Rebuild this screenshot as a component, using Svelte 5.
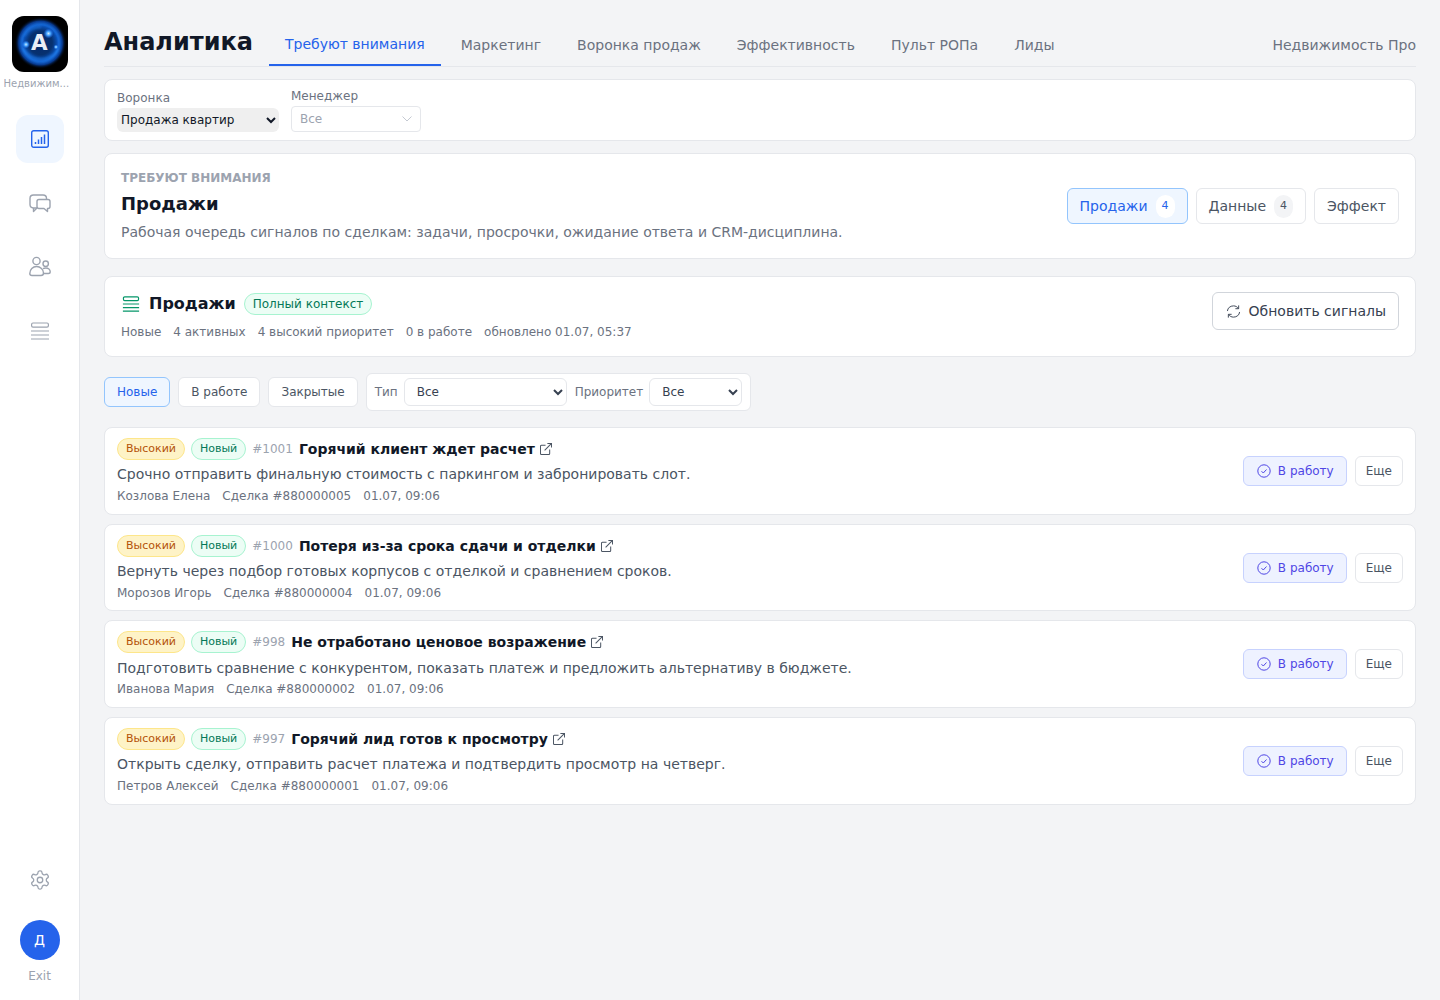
<script lang="ts">
  // analytics "needs attention" page: sidebar, tabs, filters and the signal list
  const tabs = ["Требуют внимания", "Маркетинг", "Воронка продаж", "Эффективность", "Пульт РОПа", "Лиды"];

  const signals = [
    { id: "#1001", title: "Горячий клиент ждет расчет", text: "Срочно отправить финальную стоимость с паркингом и забронировать слот.", who: "Козлова Елена", deal: "Сделка #880000005" },
    { id: "#1000", title: "Потеря из-за срока сдачи и отделки", text: "Вернуть через подбор готовых корпусов с отделкой и сравнением сроков.", who: "Морозов Игорь", deal: "Сделка #880000004" },
    { id: "#998", title: "Не отработано ценовое возражение", text: "Подготовить сравнение с конкурентом, показать платеж и предложить альтернативу в бюджете.", who: "Иванова Мария", deal: "Сделка #880000002" },
    { id: "#997", title: "Горячий лид готов к просмотру", text: "Открыть сделку, отправить расчет платежа и подтвердить просмотр на четверг.", who: "Петров Алексей", deal: "Сделка #880000001" },
  ];
</script>

<div class="shell">
  <aside class="side">
    <svg class="logo" width="56" height="56" viewBox="0 0 56 56">
      <defs>
        <radialGradient id="glow" cx="0.5" cy="0.5" r="0.5">
          <stop offset="0" stop-color="#052a6e"/>
          <stop offset="0.45" stop-color="#07316f"/>
          <stop offset="0.7" stop-color="#0c58c8"/>
          <stop offset="0.84" stop-color="#083a8f"/>
          <stop offset="1" stop-color="#000" stop-opacity="0"/>
        </radialGradient>
        <radialGradient id="spark" cx="0.5" cy="0.5" r="0.5">
          <stop offset="0" stop-color="#cfe9ff"/>
          <stop offset="0.4" stop-color="#4aa8ff"/>
          <stop offset="1" stop-color="#1e70ff" stop-opacity="0"/>
        </radialGradient>
        <filter id="soft" x="-20%" y="-20%" width="140%" height="140%">
          <feGaussianBlur stdDeviation="1"/>
        </filter>
      </defs>
      <rect width="56" height="56" rx="12" fill="#000"/>
      <circle cx="28.500" cy="27" r="26" fill="url(#glow)"/>
      <g filter="url(#soft)" fill="none" stroke="#2f95ff">
        <circle cx="28.500" cy="27" r="19" stroke-width="1.200" opacity=".7"/>
        <path d="M11 32c4 7 11 11 18 11s14-4 17-10" stroke-width="1.200" opacity=".8"/>
        <path d="M13 20c3-6 9-9 16-9" stroke-width="1" opacity=".7"/>
      </g>
      <circle cx="36.500" cy="17.500" r="5" fill="url(#spark)"/>
      <circle cx="14" cy="28.500" r="4" fill="url(#spark)"/>
      <circle cx="44" cy="31" r="2.500" fill="url(#spark)"/>
      <text x="27.300" y="34.300" text-anchor="middle" class="logo-a">A</text>
    </svg>
    <div class="org">Недвижим...</div>
    <nav class="nav">
      <a class="nav-item active" href="#a" aria-label="Аналитика">
        <svg width="20" height="20" viewBox="0 0 20 20" fill="none" stroke="currentColor" stroke-width="1.400">
          <rect x="1.700" y="1.700" width="16.600" height="16.600" rx="2"/>
          <path d="M5.500 15v-2M8.500 15v-4.500M11.500 15V8M14.500 15V5.500" stroke-width="1.500"/>
        </svg>
      </a>
      <a class="nav-item" href="#b" aria-label="Чаты">
        <svg width="24" height="24" viewBox="0 -1 24 24" fill="none" stroke="currentColor" stroke-width="1.400" stroke-linejoin="round">
          <path d="M9 16H5.500C3.500 16 2 14.600 2 12.600V6.500C2 4.500 3.500 3 5.500 3h9.500c2 0 3.500 1.500 3.500 3.500V7"/>
          <path d="M5.500 16v3.500L9 16"/>
          <path d="M11 7.500h9c1.200 0 2 .8 2 2v5c0 1.200-.8 2-2 2h-.5v3l-3.500-3h-5c-1.200 0-2-.8-2-2v-5c0-1.200.8-2 2-2z" fill="#fff"/>
        </svg>
      </a>
      <a class="nav-item" href="#c" aria-label="Клиенты">
        <svg width="24" height="24" viewBox="0 0 24 24" fill="none" stroke="currentColor" stroke-width="1.400">
          <circle cx="8.500" cy="6" r="3.600"/>
          <circle cx="17.700" cy="8.700" r="2.700"/>
          <path d="M1.800 18.500c0-4 3-7 6.800-7s6.900 3 6.900 6.500c0 1.500-.9 2.500-2.500 2.500H4c-1.400 0-2.200-.7-2.200-2z"/>
          <path d="M15 13.700c.8-.4 1.700-.7 2.800-.7 2.500 0 4.400 1.700 4.400 3.700 0 1.100-.7 1.800-1.800 1.800h-5"/>
        </svg>
      </a>
      <a class="nav-item" href="#d" aria-label="Списки">
        <svg width="20" height="20" viewBox="0 0 20 20" fill="none" stroke="currentColor" stroke-width="1.200">
          <rect x="1.600" y="2" width="16.800" height="4.200" rx="1.400"/>
          <path d="M1 10h18M1 14h18M1 18h18"/>
        </svg>
      </a>
    </nav>
    <div class="side-bottom">
      <svg class="gear" width="22" height="22" viewBox="0 0 24 24" fill="none" stroke="currentColor" stroke-width="1.400" stroke-linejoin="round">
        <path d="M12.220 2h-.44a2 2 0 0 0-2 2v.18a2 2 0 0 1-1 1.730l-.43.25a2 2 0 0 1-2 0l-.15-.08a2 2 0 0 0-2.730.73l-.22.38a2 2 0 0 0 .73 2.730l.15.1a2 2 0 0 1 1 1.720v.51a2 2 0 0 1-1 1.740l-.15.09a2 2 0 0 0-.73 2.730l.22.38a2 2 0 0 0 2.730.73l.15-.08a2 2 0 0 1 2 0l.43.25a2 2 0 0 1 1 1.730V20a2 2 0 0 0 2 2h.44a2 2 0 0 0 2-2v-.18a2 2 0 0 1 1-1.730l.43-.25a2 2 0 0 1 2 0l.15.08a2 2 0 0 0 2.730-.73l.22-.39a2 2 0 0 0-.73-2.730l-.15-.08a2 2 0 0 1-1-1.740v-.5a2 2 0 0 1 1-1.740l.15-.09a2 2 0 0 0 .73-2.730l-.22-.38a2 2 0 0 0-2.730-.73l-.15.08a2 2 0 0 1-2 0l-.43-.25a2 2 0 0 1-1-1.730V4a2 2 0 0 0-2-2z"/>
        <circle cx="12" cy="12" r="3"/>
      </svg>
      <div class="avatar">Д</div>
      <div class="exit">Exit</div>
    </div>
  </aside>

  <main class="main">
    <header class="top">
      <h1>Аналитика</h1>
      <div class="tabs">
        {#each tabs as t, i}
          <a class="tab" class:on={i === 0} href="#t">{t}</a>
        {/each}
      </div>
      <div class="company">Недвижимость Про</div>
    </header>

    <section class="card filters">
      <label class="fld">
        <span>Воронка</span>
        <select class="native"><option>Продажа квартир</option></select>
      </label>
      <div class="fld mgr">
        <span>Менеджер</span>
        <div class="fake-select">
          Все
          <svg width="10" height="6" viewBox="0 0 10 6" fill="none" stroke="#c4c9d2" stroke-width="1"><path d="M.5.5 5 5 9.500.5"/></svg>
        </div>
      </div>
    </section>

    <section class="card hero">
      <div>
        <div class="eyebrow">ТРЕБУЮТ ВНИМАНИЯ</div>
        <h2>Продажи</h2>
        <p>Рабочая очередь сигналов по сделкам: задачи, просрочки, ожидание ответа и CRM-дисциплина.</p>
      </div>
      <div class="segs">
        <button class="seg on">Продажи <em>4</em></button>
        <button class="seg">Данные <em>4</em></button>
        <button class="seg">Эффект</button>
      </div>
    </section>

    <section class="card summary">
      <div class="sum-left">
        <div class="sum-head">
          <svg width="18" height="18" viewBox="0 0 20 20" fill="none" stroke="#059669" stroke-width="1.300">
            <rect x="1.600" y="2" width="16.800" height="4.200" rx="1.400"/>
            <path d="M1 10h18M1 14h18M1 18h18"/>
          </svg>
          <h3>Продажи</h3>
          <span class="ctx">Полный контекст</span>
        </div>
        <div class="sum-meta">
          <span>Новые</span><span>4 активных</span><span>4 высокий приоритет</span><span>0 в работе</span><span>обновлено 01.07, 05:37</span>
        </div>
      </div>
      <button class="refresh">
        <svg width="15" height="15" viewBox="0 0 16 16" fill="none" stroke="currentColor" stroke-width="1">
          <path d="M1.500 7.500C1.800 4.200 4.500 2 8 2c2.300 0 4 1 5.200 2.800M14.500 8.500C14.200 11.800 11.500 14 8 14c-2.300 0-4-1-5.200-2.800"/>
          <path d="M13.500 1.500v3.500H10M2.500 14.500V11H6"/>
        </svg>
        Обновить сигналы
      </button>
    </section>

    <div class="toolbar">
      <button class="chip on">Новые</button>
      <button class="chip">В работе</button>
      <button class="chip">Закрытые</button>
      <div class="selects">
        <span>Тип</span>
        <select class="sel type"><option>Все</option></select>
        <span>Приоритет</span>
        <select class="sel prio"><option>Все</option></select>
      </div>
    </div>

    <div class="list">
      {#each signals as s}
        <article class="card row">
          <div class="row-body">
            <div class="row-head">
              <span class="pill high">Высокий</span>
              <span class="pill new">Новый</span>
              <span class="num">{s.id}</span>
              <strong>{s.title}</strong>
              <svg class="ext" width="12" height="12" viewBox="0 0 13 13" fill="none" stroke="currentColor" stroke-width="1.100">
                <path d="M6 2.500H1.500a1 1 0 0 0-1 1v8a1 1 0 0 0 1 1h8a1 1 0 0 0 1-1V7M5 8l7.500-7.500M8 .5h4.500V5"/>
              </svg>
            </div>
            <div class="row-text">{s.text}</div>
            <div class="row-meta"><span>{s.who}</span><span>{s.deal}</span><span>01.07, 09:06</span></div>
          </div>
          <div class="row-actions">
            <button class="take">
              <svg width="14" height="14" viewBox="0 0 14 14" fill="none" stroke="currentColor" stroke-width="1">
                <circle cx="7" cy="7" r="6.200"/>
                <path d="M4.500 7.200 6.300 9l3.200-3.500"/>
              </svg>
              В работу
            </button>
            <button class="more">Еще</button>
          </div>
        </article>
      {/each}
    </div>
  </main>
</div>

<style>
  :global(body) {
    margin: 0;
    background: #f3f4f6;
    font-family: "DejaVu Sans", sans-serif;
    color: #111827;
  }
  button, select { font-family: inherit; }

  .shell { display: flex; min-height: 1000px; }

  /* sidebar */
  .side {
    width: 79px;
    flex: none;
    background: #fff;
    border-right: 1px solid #e5e7eb;
    display: flex;
    flex-direction: column;
    align-items: center;
    padding-top: 16px;
    box-sizing: content-box;
  }
  .logo { display: block; flex: none; }
  .logo-a { font-family: "DejaVu Sans", sans-serif; font-weight: 700; font-size: 21.500px; fill: #e9eef6; }
  .org { width: 72px; margin-top: 5px; font-size: 10px; line-height: 14px; color: #9ca3af; white-space: nowrap; overflow: hidden; text-align: left; }
  .nav { display: flex; flex-direction: column; gap: 16px; margin-top: 24px; }
  .nav-item { width: 48px; height: 48px; border-radius: 12px; display: flex; align-items: center; justify-content: center; color: #9ca3af; }
  .nav-item.active { background: #eff6ff; color: #2563eb; }
  .side-bottom { margin-top: auto; display: flex; flex-direction: column; align-items: center; padding-bottom: 16px; }
  .gear { color: #9ca3af; margin-bottom: 29px; }
  .avatar { width: 40px; height: 40px; border-radius: 50%; background: #2563eb; color: #fff; font-size: 14px; font-weight: 500; display: flex; align-items: center; justify-content: center; }
  .exit { margin-top: 8px; font-size: 12px; line-height: 16px; color: #9ca3af; }

  /* main column */
  .main { flex: 1; min-width: 0; padding: 0 24px; }
  .top { display: flex; align-items: flex-end; height: 66px; border-bottom: 1px solid #e5e7eb; box-sizing: content-box; }
  .top h1 { margin: 0 16px 8px 0; font-size: 24px; line-height: 32px; font-weight: 700; width: 149px; white-space: nowrap; }
  .tabs { display: flex; gap: 4px; align-items: flex-end; }
  .tab { display: block; padding: 0 16px 9px; line-height: 20px; font-size: 14px; color: #6b7280; text-decoration: none; border-bottom: 2px solid transparent; }
  .tab.on { color: #2563eb; border-bottom-color: #2563eb; padding-bottom: 10px; }
  .company { margin-left: auto; font-size: 14px; line-height: 20px; color: #6b7280; padding-bottom: 11px; }

  .card { background: #fff; border: 1px solid #e5e7eb; border-radius: 8px; box-sizing: border-box; }

  .filters { height: 62px; margin-top: 12px; display: flex; align-items: flex-end; gap: 12px; padding: 0 12px 8px; }
  .fld { display: flex; flex-direction: column; font-size: 12px; color: #6b7280; }
  .fld span { line-height: 16px; margin-bottom: 2px; }
  .native { width: 162px; height: 24px; font-size: 12px; color: #111827; background: #efefef; border: none; border-radius: 6px; }
  .mgr { width: 130px; }
  .fake-select { height: 26px; box-sizing: border-box; border: 1px solid #e5e7eb; border-radius: 4px; padding: 0 8px; display: flex; align-items: center; justify-content: space-between; font-size: 12px; color: #9ca3af; }

  .hero { height: 106px; margin-top: 12px; padding: 16px; display: flex; justify-content: space-between; align-items: center; }
  .eyebrow { font-size: 12px; line-height: 16px; font-weight: 700; color: #9ca3af; }
  .hero h2 { margin: 4px 0 4px; font-size: 18px; line-height: 28px; font-weight: 700; }
  .hero p { margin: 0; font-size: 14px; line-height: 20px; color: #6b7280; }
  .segs { display: flex; gap: 8px; }
  .seg { height: 36px; padding: 0 12px; border: 1px solid #e5e7eb; border-radius: 6px; background: #fff; color: #4b5563; font-size: 14px; display: flex; align-items: center; gap: 8px; }
  .seg em { font-style: normal; font-size: 11px; width: 19px; height: 23px; line-height: 21px; border-radius: 10px; background: #f3f4f6; text-align: center; }
  .seg.on { background: #eff6ff; border-color: #93c5fd; color: #2563eb; }
  .seg.on em { background: #fff; }

  .summary { height: 81px; margin-top: 17px; padding: 0 16px; display: flex; align-items: center; justify-content: space-between; }
  .sum-left { padding-bottom: 1px; }
  .sum-head { display: flex; align-items: center; padding-left: 1px; }
  .sum-head h3 { margin: 0 8px 0 9px; font-size: 16px; line-height: 24px; font-weight: 700; }
  .ctx { font-size: 12px; line-height: 16px; color: #047857; background: #ecfdf5; border: 1px solid #a7f3d0; border-radius: 11px; padding: 2px 8px; }
  .sum-meta { display: flex; gap: 12px; margin-top: 8px; font-size: 12px; line-height: 16px; color: #6b7280; }
  .refresh { height: 38px; padding: 0 12px 0 13px; align-self: flex-start; margin-top: 15px; display: flex; align-items: center; gap: 8px; background: #fff; border: 1px solid #d1d5db; border-radius: 6px; font-size: 14px; color: #374151; }

  .toolbar { display: flex; align-items: center; gap: 8px; margin-top: 15px; height: 39px; }
  .chip { height: 30px; padding: 0 12px; background: #fff; border: 1px solid #e5e7eb; border-radius: 6px; font-size: 12px; color: #4b5563; }
  .chip.on { background: #eff6ff; border-color: #93c5fd; color: #2563eb; }
  .selects { display: flex; align-items: center; gap: 6px; height: 38px; box-sizing: border-box; background: #fff; border: 1px solid #e5e7eb; border-radius: 6px; padding: 0 8px; font-size: 12px; color: #6b7280; }
  .sel { height: 28px; background: #fff; border: 1px solid #e5e7eb; border-radius: 6px; font-size: 12px; color: #374151; padding: 0 8px; }
  .sel.type { width: 163px; margin-right: 2px; }
  .sel.prio { width: 93px; }

  .list { display: flex; flex-direction: column; gap: 9px; margin-top: 16px; }
  .row { height: 87.670px; padding: .4px 12px 0; display: flex; align-items: center; justify-content: space-between; }
  .row-head { display: flex; align-items: center; height: 24px; }
  .pill { font-size: 11px; line-height: 16px; padding: 2px 8px; border-radius: 11px; border: 1px solid; margin-right: 6px; }
  .pill.high { background: #fef3c7; border-color: #fde68a; color: #b45309; }
  .pill.new { background: #ecfdf5; border-color: #a7f3d0; color: #047857; }
  .num { font-size: 12px; color: #9ca3af; margin-right: 6px; }
  .row-head strong { font-size: 14px; font-weight: 700; }
  .ext { color: #4b5563; margin-left: 5px; }
  .row-text { margin-top: 3.400px; font-size: 14px; line-height: 20px; color: #4b5563; }
  .row-meta { display: flex; gap: 12px; margin-top: 2.500px; font-size: 12px; line-height: 18px; color: #6b7280; }
  .row-actions { display: flex; gap: 8px; }
  .take { height: 30px; padding: 0 12px 0 13px; display: flex; align-items: center; gap: 7px; background: #eef2ff; border: 1px solid #c7d2fe; border-radius: 6px; color: #4f46e5; font-size: 12px; }
  .more { height: 30px; padding: 0 10px; background: #fff; border: 1px solid #e5e7eb; border-radius: 6px; color: #4b5563; font-size: 12px; }
</style>
